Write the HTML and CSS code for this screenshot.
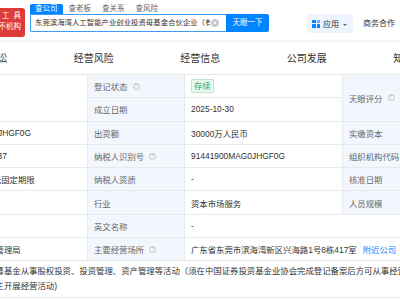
FILE: index.html
```html
<!DOCTYPE html>
<html lang="zh-CN">
  <head>
    <meta charset="UTF-8" />
    <meta name="viewport" content="width=device-width, initial-scale=1.0" />
    <title>东莞滨海湾人工智能产业创业投资母基金合伙企业 - 工商信息</title>
    <link rel="stylesheet" href="styles.css">
  </head>
  <body>
    <header class="topbar">
      <div class="logo">
        <span class="logo-top">工 具</span>
        <span>查不机构</span>
      </div>

      <div class="search">
        <nav class="search-tabs">
          <a class="active">查公司</a><a>查老板</a><a>查关系</a><a>查风险</a>
        </nav>
        <div class="search-row">
          <div class="search-input">
            <span class="query">东莞滨海湾人工智能产业创业投资母基金合伙企业（有限合伙）</span>
            <svg class="clear" width="8" height="8" viewBox="0 0 8 8">
              <circle cx="4" cy="4" r="4" fill="#c6c9cf" />
              <path d="M2.6 2.6 5.4 5.4M5.4 2.6 2.6 5.4" stroke="#fff" stroke-width="0.9" />
            </svg>
          </div>
          <button class="search-btn">天眼一下</button>
        </div>
      </div>

      <a class="apps">
        <span class="apps-icon"><i></i><i class="light"></i><i></i><i></i></span>
        <span>应用</span><span class="caret"></span>
      </a>
      <a class="biz">商务合作</a>
    </header>

    <nav class="tabs">
      <a>法律诉讼</a><a>经营风险</a><a>经营信息</a><a>公司发展</a><a>知识产权</a>
    </nav>

    <section class="info">
      <div class="tall"></div>
      <div class="label">登记状态<span class="tip">?</span></div>
      <div><span class="tag">存续</span></div>
      <div class="label tall">天眼评分<span class="tip">?</span></div>

      <div class="label">成立日期</div>
      <div>2025-10-30</div>

      <div>91441900MAG0JHGF0G</div>
      <div class="label">出资额</div>
      <div>30000万人民币</div>
      <div class="label">实缴资本</div>

      <div>441900000654337</div>
      <div class="label">纳税人识别号<span class="tip">?</span></div>
      <div>91441900MAG0JHGF0G</div>
      <div class="label">组织机构代码</div>

      <div>2025-10-30 至 无固定期限</div>
      <div class="label">纳税人资质</div>
      <div>-</div>
      <div class="label">核准日期</div>

      <div></div>
      <div class="label">行业</div>
      <div>资本市场服务</div>
      <div class="label">人员规模</div>

      <div></div>
      <div class="label">英文名称</div>
      <div class="wide">-</div>

      <div>东莞市市场监督管理局</div>
      <div class="label">主要经营场所<span class="tip">?</span></div>
      <div class="wide">广东省东莞市滨海湾新区兴海路1号8栋417室<a class="near">附近公司</a></div>

      <div class="scope">
        一般项目：以私募基金从事股权投资、投资管理、资产管理等活动（须在中国证券投资基金业协会完成登记备案后方可从事经营活动）。除依法须经批准的项目外，凭<br />营业执照依法自主开展经营活动)
      </div>
    </section>
  </body>
</html>
```

FILE: styles.css
```css
* {
  box-sizing: border-box;
}

html,
body {
  overflow: hidden;
}

body {
  margin: 0;
  width: 400px;
  height: 300px;
  background: #fff;
  color: #333;
  font-family: "Liberation Sans", "Noto Sans CJK SC", sans-serif;
}

a {
  cursor: pointer;
}

/* top bar */

.topbar {
  display: flex;
  align-items: flex-start;
  height: 40px;
  box-shadow: 0 1px 3px rgba(0, 0, 0, 0.08);
}

.logo {
  margin-top: 8px;
  width: 25px;
  height: 29px;
  padding: 2px 4px 0 0;
  background: #dd3b3a;
  border-radius: 0 3px 3px 0;
  color: #fff;
  font-size: 7.5px;
  line-height: 11px;
  display: flex;
  flex-direction: column;
  align-items: flex-end;
  overflow: hidden;
  white-space: nowrap;
}

.logo-top {
  white-space: pre;
  word-spacing: 2px;
}

.search {
  margin: 4px 0 0 5px;
}

.search-tabs {
  display: flex;
  gap: 1px;
  height: 10px;
}

.search-tabs a {
  padding: 0 5px;
  font-size: 7.5px;
  line-height: 10px;
  color: #666;
}

.search-tabs .active {
  background: #0084ff;
  color: #fff;
  border-radius: 2px 2px 0 0;
}

.search-row {
  display: flex;
  height: 18px;
}

.search-input {
  width: 196px;
  display: flex;
  align-items: center;
  padding-left: 4px;
  border: 1px solid #3d9cf8;
  border-right: 0;
  border-radius: 0 0 0 2px;
}

.query {
  flex: 1;
  overflow: hidden;
  white-space: nowrap;
  font-size: 7.4px;
  line-height: 10px;
}

.clear {
  flex: none;
  margin: 0 7px 0 1px;
}

.search-btn {
  width: 43px;
  border: 0;
  padding: 0;
  background: #0084ff;
  color: #fff;
  font-family: inherit;
  font-size: 7.5px;
  line-height: 10px;
  border-radius: 0 2px 2px 0;
}

.apps {
  margin: 14px 0 0 38px;
  height: 19px;
  padding: 0 6px 0 5px;
  display: flex;
  align-items: center;
  gap: 3px;
  background: #edf4fe;
  border-radius: 2px;
  font-size: 8px;
  white-space: nowrap;
}

.apps-icon {
  width: 8px;
  height: 8px;
  display: grid;
  grid-template-columns: 3.5px 3.5px;
  grid-template-rows: 3.5px 3.5px;
  gap: 1px;
}

.apps-icon i {
  background: #0084ff;
  border-radius: 0.5px;
}

.apps-icon .light {
  background: #5fb0ff;
}

.caret {
  margin: 2px 0 0 1px;
  border: 2px solid transparent;
  border-bottom: 0;
  border-top: 2.5px solid #666;
}

.biz {
  margin: 14px 0 0 10px;
  line-height: 19px;
  font-size: 8px;
  white-space: nowrap;
}

/* section tabs */

.tabs {
  display: flex;
  align-items: center;
  height: 34px;
  margin-left: -66px;
  white-space: nowrap;
}

.tabs a {
  flex: 0 0 106.5px;
  text-align: center;
  font-size: 10px;
}

/* registration table */

.info {
  display: grid;
  grid-template-columns: 157px 97px 158px 110px;
  grid-template-rows: repeat(8, 23.3px) 37px;
  margin-left: -69px;
  border-top: 1px solid #e9e9e9;
  font-size: 8.4px;
}

.info > div {
  display: flex;
  align-items: center;
  padding: 0 6px;
  white-space: nowrap;
  border-bottom: 1px solid #e9e9e9;
  border-right: 1px solid #e9e9e9;
}

.info .label {
  background: #f2f7fe;
  color: #666;
}

.info .tall {
  grid-row: span 2;
}

.info .wide {
  grid-column: span 2;
}

.info .scope {
  grid-column: 1 / -1;
  display: block;
  padding-top: 3px;
  line-height: 15px;
}

.tip {
  width: 7px;
  height: 7px;
  margin-left: 5px;
  border: 1px solid #c4c4c4;
  border-radius: 50%;
  color: #bbb;
  font-size: 5px;
  line-height: 5px;
  text-align: center;
}

.tag {
  padding: 0 2px;
  line-height: 12px;
  border: 1px solid #bfe6cb;
  background: #eaf8ef;
  color: #25a55a;
  border-radius: 1px;
}

.near {
  margin-left: 6px;
  color: #0084ff;
}
```
